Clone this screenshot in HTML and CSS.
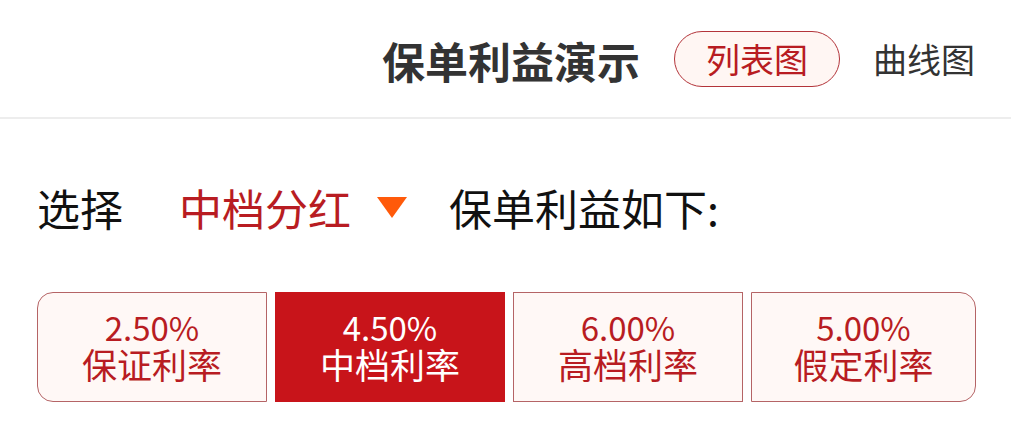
FILE: index.html
```html
<!DOCTYPE html>
<html lang="zh-CN">
<head>
    <meta charset="UTF-8">
    <title>保单利益演示</title>
    <meta name="viewport" content="width=device-width, initial-scale=1.0"/>
    <link rel="stylesheet" href="styles.css">
</head>

<body>
    <div class="header">
        <h2 class="title">保单利益演示</h2>
        <span class="view-btn active">列表图</span>
        <span class="view-btn">曲线图</span>
    </div>

    <div class="select-row">
        <span class="label">选择</span>
        <span class="picker">中档分红</span>
        <span class="arrow"></span>
        <span class="label">保单利益如下:</span>
    </div>

    <div class="rate-tabs">
        <div class="rate-tab">
            <span class="rate">2.50%</span>
            <span class="rate-name">保证利率</span>
        </div>
        <div class="rate-tab selected">
            <span class="rate">4.50%</span>
            <span class="rate-name">中档利率</span>
        </div>
        <div class="rate-tab">
            <span class="rate">6.00%</span>
            <span class="rate-name">高档利率</span>
        </div>
        <div class="rate-tab">
            <span class="rate">5.00%</span>
            <span class="rate-name">假定利率</span>
        </div>
    </div>
</body>
</html>
```

FILE: styles.css
```css
body {
    margin: 0;
    background: #fff;
    font-family: "Noto Sans CJK SC", "Noto Sans", sans-serif;
    color: #111;
}

.header {
    display: flex;
    justify-content: flex-end;
    align-items: center;
    height: 119px;
    padding: 0 36px 0 0;
    border-bottom: 2px solid #ededed;
    box-sizing: border-box;
}

.title {
    margin: 4px 34px 0 0;
    font-size: 43px;
    font-weight: 700;
    color: #333;
    line-height: 1;
}

.view-btn {
    font-size: 34px;
    line-height: 1;
    color: #333;
}

.view-btn.active {
    display: flex;
    align-items: center;
    height: 56px;
    padding: 0 31px;
    margin-right: 33px;
    border: 1px solid #b3343a;
    border-radius: 28px;
    background: #fff6f3;
    color: #b81c22;
    box-sizing: border-box;
}

.select-row {
    display: flex;
    align-items: center;
    height: 60px;
    margin-top: 58px;
    padding-left: 37px;
    font-size: 43px;
}

.picker {
    margin-left: 56px;
    color: #b81c22;
}

.arrow {
    width: 0;
    height: 0;
    margin: 0 42px 0 26px;
    border-left: 15px solid transparent;
    border-right: 15px solid transparent;
    border-top: 21px solid #ff5a0a;
}

.rate-tabs {
    display: flex;
    gap: 8px;
    margin-top: 55px;
    padding: 0 35px 0 37px;
}

.rate-tab {
    flex: 0 0 230px;
    height: 110px;
    display: flex;
    flex-direction: column;
    justify-content: center;
    align-items: center;
    padding-bottom: 3px;
    border: 1px solid #b56466;
    background: #fff8f6;
    color: #b81c22;
    box-sizing: border-box;
}

.rate-tab:first-child {
    border-radius: 16px 0 0 16px;
}

.rate-tab:last-child {
    flex: 1;
    border-radius: 0 16px 16px 0;
}

.rate-tab.selected {
    background: #c8141a;
    border-color: #c8141a;
    color: #fff;
}

.rate {
    font-size: 33px;
    line-height: 36px;
}

.rate-name {
    font-size: 35px;
    line-height: 38px;
}
```
